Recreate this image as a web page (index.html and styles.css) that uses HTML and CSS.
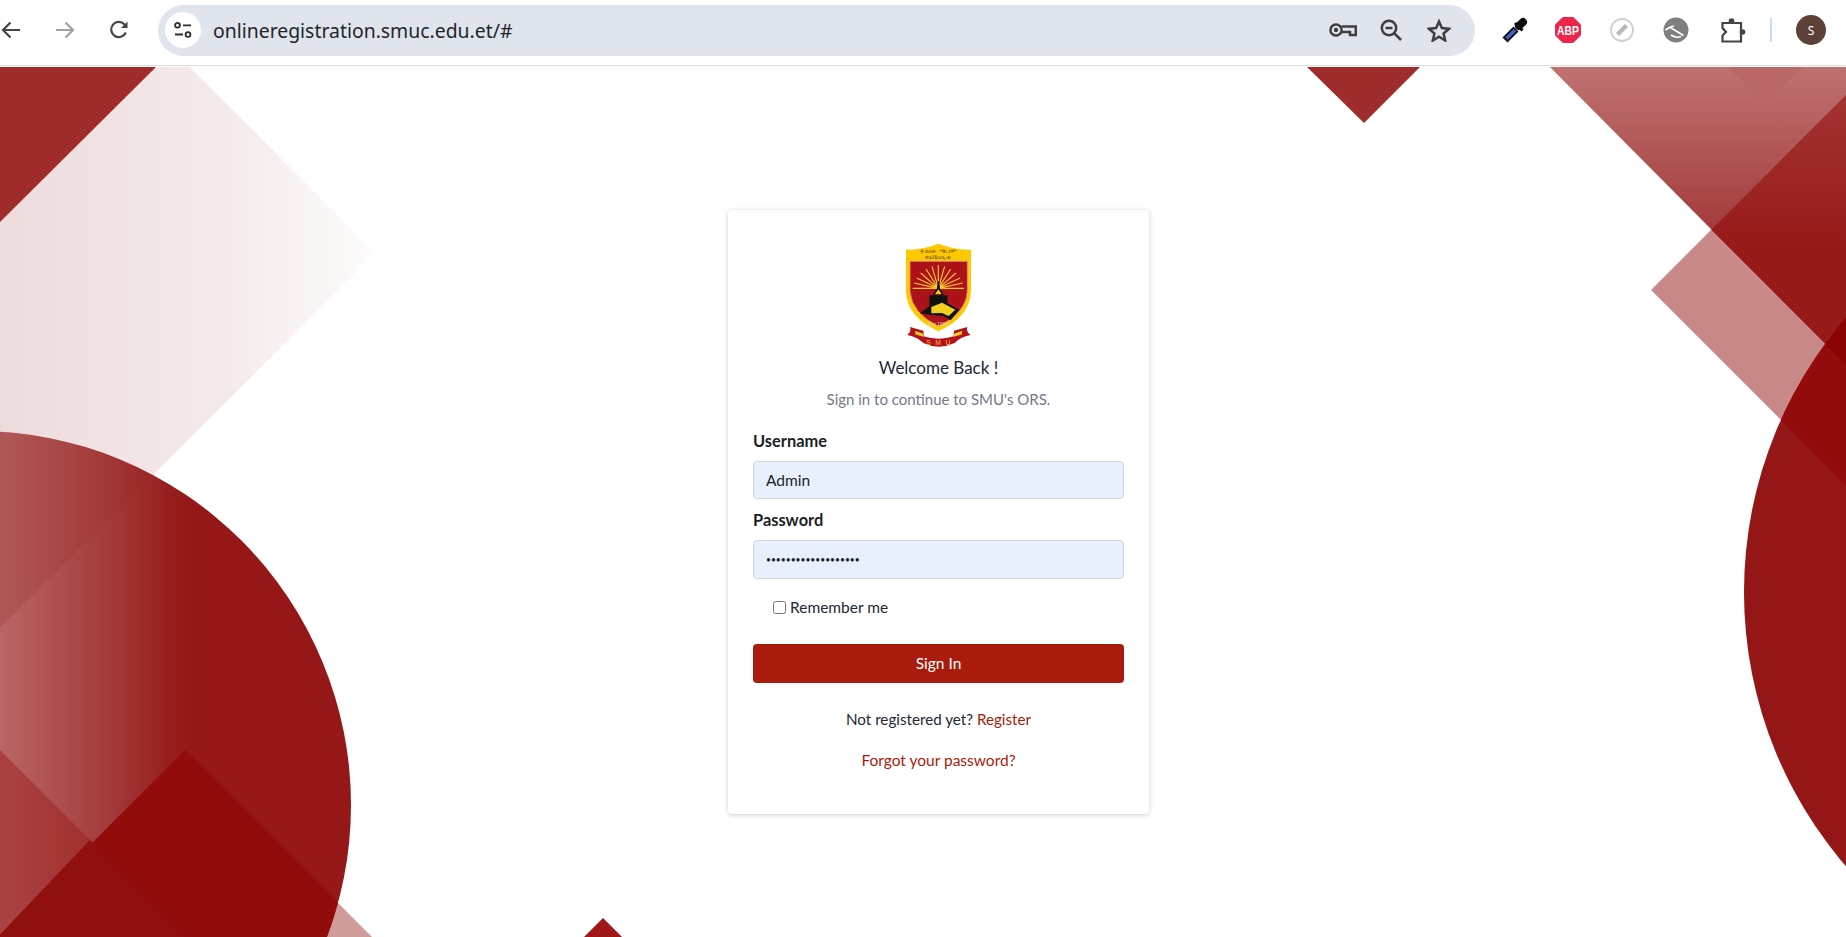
FILE: index.html
```html
<!DOCTYPE html>
<html lang="en">
<head>
<meta charset="utf-8">
<title>SMU Online Registration</title>
<link rel="stylesheet" href="styles.css">
</head>
<body>
<header class="toolbar">
  <button class="nav-btn" aria-label="Back"><svg viewBox="0 0 20 18" width="20" height="18"><path d="M19 9H2M9.500 1.500L2 9l7.500 7.500" class="ic-line"/></svg></button>
  <button class="nav-btn nav-off" aria-label="Forward"><svg viewBox="0 0 20 18" width="20" height="18"><path d="M1 9h17M10.500 1.500L18 9l-7.500 7.500" class="ic-line"/></svg></button>
  <button class="nav-btn" aria-label="Reload"><svg viewBox="0 0 20 20" width="20" height="20"><path d="M16.800 12.500A7.600 7.600 0 1 1 15.500 4.500L17.500 6.500" class="ic-line"/><path d="M18.500 1.500V8H12z" class="ic-fill"/></svg></button>
  <div class="omnibox">
    <span class="chip"><svg viewBox="0 0 18 16" width="18" height="16"><circle cx="3.500" cy="3.300" r="2.400" class="ic-thin"/><path d="M9 3.300h8M1 12.500h8" class="ic-thin"/><circle cx="14" cy="12.500" r="2.400" class="ic-thin"/></svg></span>
    <span class="url">onlineregistration.smuc.edu.et/#</span>
    <span class="omni-icons">
      <span class="omni-icon"><svg viewBox="0 0 28 14" width="28" height="14"><circle cx="7" cy="7" r="5.600" class="ic-heavy"/><circle cx="7" cy="7" r="2.200" class="ic-fill"/><path d="M12.500 3.500H26.800V12H21V9H12.500" class="ic-heavy"/></svg></span>
      <span class="omni-icon"><svg viewBox="0 0 22 22" width="22" height="22"><circle cx="9" cy="9" r="7.200" class="ic-heavy"/><path d="M5.500 9h7M14.300 14.300L21 21" class="ic-heavy"/></svg></span>
      <span class="omni-icon"><svg viewBox="0 0 24 23" width="24" height="23"><path d="M12 2.500l2.900 6.600 7.100.7-5.400 4.700 1.600 7-6.200-3.700-6.200 3.700 1.600-7L2 9.800l7.100-.7z" class="ic-heavy"/></svg></span>
    </span>
  </div>
  <span class="ext ext-a"><svg viewBox="0 0 26 26" width="26" height="26"><path d="M3 23L14 12" class="drop-body"/><path d="M4.500 21.500L13 13" class="drop-fluid"/><path d="M17 9l4-4" class="drop-head"/><path d="M13 6l7.500 7.500" class="drop-bar"/></svg></span>
  <span class="ext ext-a"><svg viewBox="0 0 26 26" width="26" height="26"><path d="M7.800 0.500h10.400L25.500 7.800v10.400L18.200 25.500H7.800L0.500 18.200V7.800z" class="abp-oct"/><text x="13" y="17.500" textLength="22" lengthAdjust="spacingAndGlyphs" class="abp-text">ABP</text></svg></span>
  <span class="ext ext-b"><svg viewBox="0 0 26 26" width="26" height="26"><circle cx="13" cy="13" r="11" class="edit-ring"/><path d="M8.500 17.500L17.500 8.500" class="edit-pen"/></svg></span>
  <span class="ext ext-b"><svg viewBox="0 0 26 26" width="26" height="26"><circle cx="13" cy="13" r="12.500" class="grey-disc"/><path d="M2.500 13Q7 9.500 11 9" class="grey-cut"/><path d="M6.500 10L20.500 18.500" class="grey-cut"/><path d="M8 18Q13 21.500 18 19.500" class="grey-cut"/></svg></span>
  <span class="ext ext-c"><svg viewBox="0 0 26 26" width="26" height="26"><path d="M2.500 6H21V24.500H2.500V18.500L6 15L2.500 11z" class="ic-line"/><circle cx="11.500" cy="4" r="2.800" class="ic-fill"/><circle cx="22.500" cy="15" r="2.800" class="ic-fill"/></svg></span>
  <span class="divider"></span>
  <span class="avatar">S</span>
</header>

<main class="stage">
  <svg class="backdrop" viewBox="0 66 1846 871" aria-hidden="true">
    <defs>
      <linearGradient id="paleFade" gradientUnits="userSpaceOnUse" x1="0" y1="0" x2="375" y2="0"><stop offset="0" stop-color="#eedcdd"/><stop offset=".6" stop-color="#f5eaea"/><stop offset="1" stop-color="#fefcfc"/></linearGradient>
      <linearGradient id="discFade" gradientUnits="userSpaceOnUse" x1="0" y1="0" x2="200" y2="0"><stop offset="0" stop-color="#b96666"/><stop offset=".5" stop-color="#a63e3e"/><stop offset=".85" stop-color="#981e1e"/><stop offset="1" stop-color="#951717"/></linearGradient>
      <linearGradient id="paleShade" gradientUnits="userSpaceOnUse" x1="0" y1="0" x2="190" y2="0"><stop offset="0" stop-color="#7a0000" stop-opacity=".14"/><stop offset="1" stop-color="#7a0000" stop-opacity="0"/></linearGradient>
      <linearGradient id="lowerFade" gradientUnits="userSpaceOnUse" x1="0" y1="0" x2="180" y2="0"><stop offset="0" stop-color="#ab4242"/><stop offset="1" stop-color="#981e1e"/></linearGradient>
      <linearGradient id="bigFade" gradientUnits="userSpaceOnUse" x1="0" y1="67" x2="0" y2="240"><stop offset="0" stop-color="#bf7272"/><stop offset="1" stop-color="#a23838"/></linearGradient>
      <linearGradient id="innerFade" gradientUnits="userSpaceOnUse" x1="0" y1="95" x2="0" y2="250"><stop offset="0" stop-color="#a33333"/><stop offset="1" stop-color="#961a1a"/></linearGradient>
      <clipPath id="leftDisc"><circle cx="-23" cy="805" r="374"/></clipPath>
      <clipPath id="rightDisc"><circle cx="2164" cy="592" r="420"/></clipPath>
    </defs>
    <polygon points="0,67 190,67 375,253 0,628" fill="url(#paleFade)"/>
    <polygon points="0,67 156,67 0,222" fill="#9f2b2b"/>
    <polygon points="185,750 380,945 -10,945" fill="#cf9b9b"/>
    <circle cx="-23" cy="805" r="374" fill="url(#discFade)"/>
    <g clip-path="url(#leftDisc)">
      <polygon points="0,420 208,420 0,628" fill="url(#paleShade)"/>
      <polygon points="0,750 190,940 0,940" fill="url(#lowerFade)"/>
      <polygon points="185,750 380,945 -10,945" fill="#930c0c"/>
      <polygon points="90,840 195,945 -10,945" fill="#900f0f"/>
    </g>
    <polygon points="1307,67 1420,67 1364,123" fill="#9e2c2c"/>
    <polygon points="597,924 603,918 609,924 628,943 578,943" fill="#a01818"/>
    <polygon points="1550,67 1846,67 1846,365" fill="url(#bigFade)"/>
    <polygon points="1728,67 1803,67 1765,105" fill="#b96767"/>
    <polygon points="1711,230 1846,95 1846,365" fill="url(#innerFade)"/>
    <polygon points="1651,290 1711,230 1846,365 1846,485" fill="#c98989"/>
    <circle cx="2164" cy="592" r="420" fill="#951616"/>
    <g clip-path="url(#rightDisc)">
      <polygon points="1651,290 1711,230 1846,365 1846,485" fill="#930b0b"/>
      <polygon points="1711,230 1846,95 1846,365" fill="#8b0202"/>
    </g>
  </svg>

  <section class="card">
    <svg class="logo" viewBox="138 40 195 315" width="65" height="105" role="img" aria-label="St. Mary's University crest">
      <path d="M138 60Q192 60 235 42Q280 60 333 60V185Q330 262 235 305Q140 262 138 185Z" class="crest-gold"/>
      <path d="M150 95H322V185Q318 250 235 290Q155 250 150 185Z" class="crest-red"/>
      <text x="235" y="69" textLength="110" lengthAdjust="spacingAndGlyphs" class="crest-am">ቅድስት ማርያም</text>
      <text x="235" y="88" textLength="80" lengthAdjust="spacingAndGlyphs" class="crest-am">ዩኒቨርሲቲ</text>
      <path d="M235 176L158 176M235 176L162 160M235 176L170 145M235 176L182 130M235 176L198 118M235 176L216 110M235 176L235 106M235 176L254 110M235 176L272 118M235 176L288 130M235 176L300 145M235 176L308 160M235 176L312 176" class="crest-rays"/>
      <path d="M233 155h5l2 22h-9z" class="crest-black"/>
      <path d="M235 170L252 197H218Z" class="crest-black"/>
      <path d="M235 179L245 194H225Z" class="crest-yellow"/>
      <path d="M208 197H262V228H208Z" class="crest-black"/>
      <path d="M180 251L212 227L246 212L298 240L272 272L250 259L215 256Z" class="crest-black"/>
      <path d="M214 232L246 219L286 240L266 259L246 250L214 251Z" class="crest-yellow"/>
      <text x="235" y="288" class="crest-est">Est.1998</text>
      <path d="M142 316Q155 306 150 292L190 303Q192 316 190 320Q236 334 282 320Q280 316 282 303L322 292Q317 306 332 316Q300 322 284 340Q236 362 190 340Q172 322 142 316Z" class="crest-ribbon"/>
      <path d="M166 304L190 312V321L166 314ZM306 304L282 312V321L306 314Z" class="crest-yellow"/>
      <text x="242" y="347" class="crest-smu">SMU</text>
    </svg>
    <h1 class="title">Welcome Back !</h1>
    <p class="subtitle">Sign in to continue to SMU's ORS.</p>
    <form class="form">
      <label class="label label-user" for="user">Username</label>
      <input class="input" id="user" type="text" value="Admin">
      <label class="label label-pass" for="pass">Password</label>
      <input class="input input-pass" id="pass" type="password" value="aaaaaaaaaaaaaaaaaaa">
      <label class="remember"><input class="check" type="checkbox"><span>Remember me</span></label>
      <button class="submit" type="button"><span class="submit-text">Sign In</span></button>
      <p class="note note-register">Not registered yet? <a href="#" class="link">Register</a></p>
      <p class="note note-forgot"><a href="#" class="link">Forgot your password?</a></p>
    </form>
  </section>
</main>
</body>
</html>
```
FILE: styles.css
```css
* { box-sizing: border-box; }
html, body { margin: 0; height: 100%; overflow: hidden; background: #fff; }
body { font-family: "Lato", "Noto Sans", sans-serif; color: #212837; }

.toolbar { display: flex; align-items: center; height: 66px; padding-bottom: 5px; background: #fff; border-bottom: 1px solid #dcdcdc; }
.nav-btn { display: flex; align-items: center; justify-content: center; width: 22px; height: 24px; margin-right: 32px; padding: 0; border: 0; background: none; color: #454545; }
.nav-off { color: #a3a3a3; }
.nav-btn:nth-child(3) { margin-right: 28px; }
.ic-line { fill: none; stroke: currentColor; stroke-width: 2.2; }
.ic-heavy { fill: none; stroke: #3f3f3f; stroke-width: 2.5; }
.ic-thin { fill: none; stroke: currentColor; stroke-width: 1.8; }
.ic-fill { fill: currentColor; }

.omnibox { display: flex; align-items: center; flex: none; width: 1317px; height: 51px; padding: 0 22px 0 7px; border-radius: 26px; background: #e0e5ed; color: #3f3f3f; }
.chip { display: flex; align-items: center; justify-content: center; width: 36px; height: 36px; border-radius: 50%; background: #fff; color: #2c2c2c; }
.url { margin-left: 12px; font-family: "Noto Sans", sans-serif; font-size: 19.400px; color: #22262c; }
.omni-icons { display: flex; gap: 20px; margin-left: auto; }
.omni-icon { display: flex; align-items: center; justify-content: center; width: 28px; height: 26px; }

.ext { display: flex; flex: none; width: 26px; height: 26px; color: #454545; }
.ext-a { margin-left: 27px; }
.ext-b { margin-left: 28px; }
.ext-c { margin-left: 31px; }
.drop-body { fill: none; stroke: #0d0d0d; stroke-width: 7; }
.drop-fluid { fill: none; stroke: #3f5fc4; stroke-width: 3.6; }
.drop-head { fill: none; stroke: #0d0d0d; stroke-width: 8; stroke-linecap: round; }
.drop-bar { fill: none; stroke: #0d0d0d; stroke-width: 3; }
.abp-oct { fill: #f0254a; stroke: #f0254a; }
.abp-text { fill: #fff; font-family: "Liberation Sans", sans-serif; font-size: 12px; font-weight: 700; text-anchor: middle; }
.edit-ring { fill: #fff; stroke: #cfcfcf; stroke-width: 1.800; }
.edit-pen { fill: none; stroke: #b9b9b9; stroke-width: 4.500; }
.grey-disc { fill: #7f7f7f; }
.grey-cut { fill: none; stroke: #fff; stroke-width: 1.600; }
.divider { flex: none; width: 2px; height: 24px; margin-left: 24px; background: #c9daf8; }
.avatar { display: flex; flex: none; align-items: center; justify-content: center; width: 30px; height: 30px; margin-left: 24px; border-radius: 50%; background: #5d4037; color: #fff; font-family: "Noto Sans", sans-serif; font-size: 12px; }

.stage { position: relative; height: 871px; padding: 144px 0 0 728px; overflow: hidden; background: #fff; }
.backdrop { position: absolute; inset: 0; width: 1846px; height: 871px; }

.card { position: relative; display: flex; flex-direction: column; width: 421px; height: 604px; padding: 33px 25px 0; border-radius: 4px; background: #fff; box-shadow: 0 1px 5px rgba(0, 0, 0, .2); }
.logo { display: block; flex: none; margin: 0 auto; }
.crest-gold { fill: #fdc800; }
.crest-red { fill: #ad121b; stroke: #dc8f8f; stroke-width: 2.500; }
.crest-rays { fill: none; stroke: #f7c62c; stroke-width: 3.500; }
.crest-black { fill: #111; }
.crest-yellow { fill: #f3d020; }
.crest-am { fill: #5a3a10; font-family: "Noto Sans", sans-serif; font-size: 16px; text-anchor: middle; }
.crest-est { fill: #f3d9a0; font-family: "Liberation Sans", sans-serif; font-size: 15px; text-anchor: middle; }
.crest-ribbon { fill: #b3131c; }
.crest-smu { fill: #f3c23a; font-family: "Liberation Sans", sans-serif; font-size: 20px; letter-spacing: 14px; text-anchor: middle; }

.title { margin: 8px 0 0; font-size: 17px; font-weight: 400; line-height: 24px; text-align: center; }
.subtitle { margin: 7px 0 0; font-size: 15px; line-height: 24px; text-align: center; color: #74798a; }

.form { display: flex; flex-direction: column; }
.label { font-size: 16.400px; font-weight: 700; line-height: 21px; color: #1b1f27; }
.label-user { margin-top: 19px; margin-bottom: 10px; }
.label-pass { margin-top: 10px; margin-bottom: 10px; }
.input { width: 371px; height: 38px; padding: 0 12px; border: 1px solid #ced4e2; border-radius: 4px; background: #e8f0fe; font: 400 15.500px "Lato", "Noto Sans", sans-serif; color: #1b1f27; }
.input-pass { height: 39px; font-size: 8.500px; }
.remember { display: flex; align-items: center; height: 21px; margin-top: 18px; padding-left: 20px; font-size: 15.500px; line-height: 21px; }
.check { width: 13px; height: 13px; margin: 0 4px 0 0; }
.submit { height: 39px; margin-top: 26px; padding: 0 0 2px; border: 0; border-radius: 4px; background: #a81b0d; color: #fff; font: 400 15.500px "Lato", "Noto Sans", sans-serif; }
.note { margin: 26px 0 0; font-size: 15.500px; line-height: 21px; text-align: center; }
.note-register { font-size: 15.200px; }
.note-forgot { margin-top: 20px; }
.link { color: #a81b0d; text-decoration: none; }
```
